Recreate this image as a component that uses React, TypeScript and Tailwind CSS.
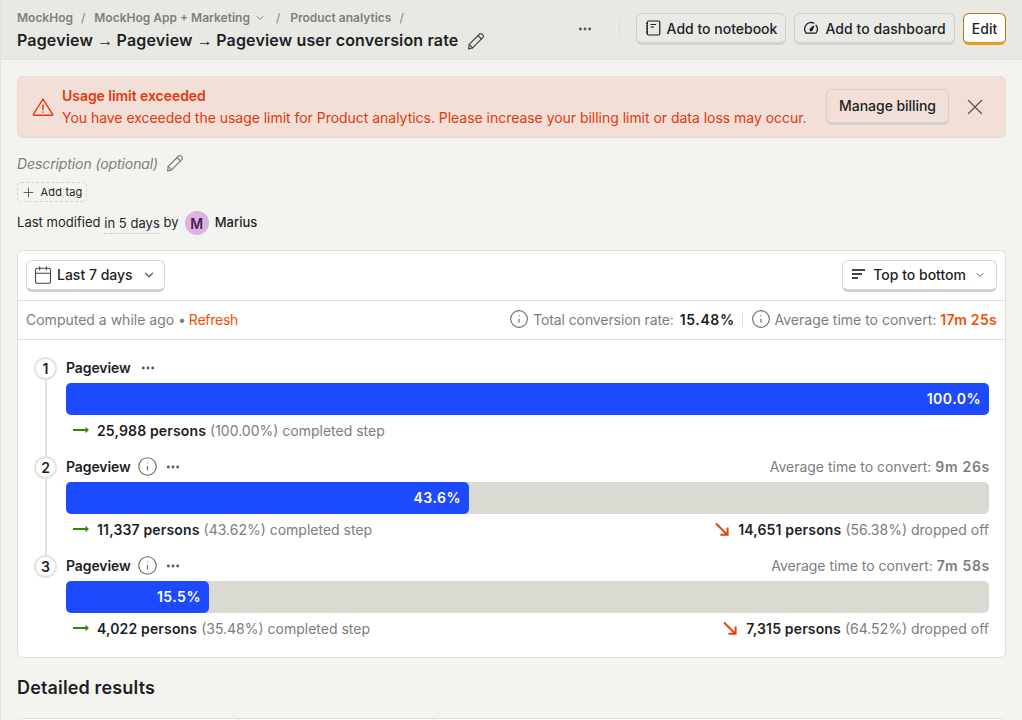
import { Calendar, ChevronDown, Info, MoreHorizontal, Plus, X } from 'lucide-react';

function Pencil({ className }: { className?: string }) {
    return (
        <svg viewBox="0 0 20 20" fill="none" stroke="currentColor" strokeWidth="1.2" strokeLinejoin="round" strokeLinecap="round" className={className}>
            <path d="M3.2 13.4 13.6 3a1.6 1.6 0 0 1 2.3 0l1.1 1.1a1.6 1.6 0 0 1 0 2.3L6.6 16.8l-4 1 .6-4.4Z" />
            <path d="m12 4.6 3.4 3.4M3.2 13.4l3.4 3.4" />
        </svg>
    );
}

function Notebook() {
    return (
        <svg viewBox="0 0 16 16" fill="none" stroke="currentColor" strokeWidth="1.2" className="h-[16px] w-[16px]">
            <rect x="2.2" y="1" width="12.6" height="14" rx="1.4" />
            <path d="M5.5 4.5h5.5M5.5 7h3.5M1 3.5h2M1 6h2M1 8.5h2M1 11h2M1 13h2" />
        </svg>
    );
}

function Gauge() {
    return (
        <svg viewBox="0 0 16 16" fill="none" stroke="currentColor" strokeWidth="1.3" strokeLinecap="round" className="h-[16px] w-[16px]">
            <path d="M3 13.2A6.8 6.8 0 0 1 8 2.4c1 0 2 .2 2.8.7M13 5.2a6.8 6.8 0 0 1 0 8H3" />
            <path d="m7.2 9.2 3.6-3.2-1.8 4.2a1 1 0 0 1-1.8-1Z" fill="currentColor" />
        </svg>
    );
}

function Warning() {
    return (
        <svg viewBox="0 0 22 20" fill="none" stroke="currentColor" strokeWidth="1.4" strokeLinejoin="round" strokeLinecap="round" className="h-[20px] w-[22px]">
            <path d="M11 2 1.4 17.4a.6.6 0 0 0 .5.9h18.2a.6.6 0 0 0 .5-.9L11 2Z" />
            <path d="M11 8v4.5M11 15v.3" />
        </svg>
    );
}

function SortBars() {
    return (
        <svg viewBox="0 0 14 14" fill="currentColor" className="h-[14px] w-[14px] text-[#444]">
            <rect x="0" y="1" width="13" height="2" />
            <rect x="0" y="5" width="10" height="2" />
            <rect x="0" y="9" width="6" height="2" />
        </svg>
    );
}

function RightArrow() {
    return (
        <svg viewBox="0 0 16 8" className="h-[8px] w-[16px]" fill="#388600">
            <rect x="0" y="3" width="14" height="2" />
            <path d="M12.5 0.8 16 4l-3.5 3.2Z" />
        </svg>
    );
}

function DownArrow() {
    return (
        <svg viewBox="0 0 14 14" className="h-[14px] w-[14px]" fill="none" stroke="#e83f0c" strokeWidth="2">
            <path d="M1 1.5 12 12.5M12.6 5.5v7.2H5.4" />
        </svg>
    );
}

function ActionButton({ icon, label, className }: { icon?: React.ReactNode; label: string; className: string }) {
    return (
        <div className={`flex h-[32px] items-center justify-center gap-[6px] rounded-[6px] border border-b-[3px] text-[14px] font-[450] text-[#1d1f27] ${className}`}>
            {icon}
            {label}
        </div>
    );
}

type Step = {
    n: number;
    width: string;
    pct: string;
    persons: string;
    rate: string;
    time?: string;
    dropped?: string;
    dropRate?: string;
};

const steps: Step[] = [
    { n: 1, width: 'w-full', pct: '100.0%', persons: '25,988', rate: '100.00%' },
    { n: 2, width: 'w-[403px]', pct: '43.6%', persons: '11,337', rate: '43.62%', time: '9m 26s', dropped: '14,651', dropRate: '56.38%' },
    { n: 3, width: 'w-[143px]', pct: '15.5%', persons: '4,022', rate: '35.48%', time: '7m 58s', dropped: '7,315', dropRate: '64.52%' },
];

function FunnelStep({ step }: { step: Step }) {
    return (
        <div className="relative pl-[32px]">
            {step.n < 3 && <div className="absolute left-[11px] top-[20px] h-[90px] w-[2px] bg-[#e3e3de]" />}
            <div className="absolute left-0 top-[4px] flex h-[23px] w-[23px] items-center justify-center rounded-full border-2 border-[#e3e3de] bg-white text-[14px] font-semibold text-[#1d1f27]">
                {step.n}
            </div>
            <div className="flex h-[30px] items-center pb-[1px]">
                <span className="text-[14px] font-semibold tracking-[-0.1px] text-[#1d1f27]">Pageview</span>
                {step.n > 1 && <Info size={21} strokeWidth={1.4} className="ml-[6px] text-[#6f6f6c]" />}
                <MoreHorizontal size={16} strokeWidth={2.2} className={`text-[#555] ${step.n > 1 ? 'ml-[7px]' : 'ml-[9px]'}`} />
                {step.time && (
                    <span className="ml-auto mr-[-1px] text-[14px] text-[#7d7d7b]">
                        Average time to convert: <b className="font-semibold tracking-[0.7px]">{step.time}</b>
                    </span>
                )}
            </div>
            <div className="h-[32px] rounded-[5px] bg-[#dadad3]">
                <div className={`flex h-full items-center justify-end rounded-[5px] bg-[#1d4aff] pb-[1px] pr-[8px] text-[14px] font-semibold tracking-[0.5px] text-white ${step.width}`}>
                    {step.pct}
                </div>
            </div>
            <div className="flex h-[34px] items-center pb-[4px] text-[14px]">
                <span className="ml-[7px] mr-[8px]"><RightArrow /></span>
                <b className="font-semibold tracking-[0.15px] text-[#1d1f27]">{step.persons} persons</b>
                <span className="ml-[4px] text-[#7d7d7b]">({step.rate}) completed step</span>
                {step.dropped && (
                    <span className="ml-auto flex items-center">
                        <span className="mr-[9px]"><DownArrow /></span>
                        <b className="font-semibold tracking-[0.15px] text-[#1d1f27]">{step.dropped} persons</b>
                        <span className="ml-[4px] text-[#7d7d7b]">({step.dropRate}) dropped off</span>
                    </span>
                )}
            </div>
        </div>
    );
}

export default function App() {
    return (
        <div className="h-[720px] overflow-hidden border-l border-[#e3e3de] bg-[#f3f4ef] font-['Inter',sans-serif] text-[#1d1f27]">
            <header className="flex h-[60px] items-start justify-between border-b border-[#e3e3de] bg-[#e9e9e4] pl-[16px] pr-[16px]">
                <div className="pt-[9px]">
                    <div className="flex h-[17px] items-center text-[12px] font-semibold text-[#7f7f7c]">
                        <span>MockHog</span>
                        <span className="ml-[8px] mr-[9px] font-normal">/</span>
                        <span>MockHog App + Marketing</span>
                        <ChevronDown size={12} className="ml-[4px]" />
                        <span className="ml-[10px] mr-[10px] font-normal">/</span>
                        <span>Product analytics</span>
                        <span className="ml-[8px] font-normal">/</span>
                    </div>
                    <div className="mt-[4px] flex items-center text-[16px] font-semibold leading-[20px] tracking-[0.16px]">
                        <span>
                            Pageview <span className="mr-[-1px] font-['Liberation_Sans'] font-normal">→</span> Pageview <span className="mr-[-1px] font-['Liberation_Sans'] font-normal">→</span> Pageview user conversion rate
                        </span>
                        <Pencil className="ml-[8px] h-[20px] w-[20px] text-[#444]" />
                    </div>
                </div>
                <div className="flex items-center pt-[13px]">
                    <MoreHorizontal size={16} strokeWidth={2.4} className="text-[#555]" />
                    <div className="ml-[26px] mr-[16px] h-[17px] w-px bg-[#dcdcd7]" />
                    <ActionButton icon={<Notebook />} label="Add to notebook" className="w-[150px] border-[#cfcfcb] border-b-[#d4d1d3] bg-[#e9e9e5]" />
                    <div className="w-[8px]" />
                    <ActionButton icon={<Gauge />} label="Add to dashboard" className="w-[161px] border-[#cfcfcb] border-b-[#d4d1d3] bg-[#e9e9e5] tracking-[0.06px]" />
                    <div className="w-[8px]" />
                    <ActionButton label="Edit" className="w-[43px] border-[#b17816] border-b-[#e89a1f] bg-white" />
                </div>
            </header>

            <main className="pl-[16px] pr-[16px] pt-[16px]">
                <div className="flex h-[62px] items-center rounded-[6px] border border-[#e6dcd5] bg-[#f1dfd8] pl-[14px] pr-[17px] text-[#e3390c]">
                    <Warning />
                    <div className="ml-[8px] flex-1 text-[14px] leading-[22px] tracking-[-0.03px]">
                        <div className="font-semibold tracking-[-0.05px]">Usage limit exceeded</div>
                        <div>You have exceeded the usage limit for Product analytics. Please increase your billing limit or data loss may occur.</div>
                    </div>
                    <div className="flex h-[36px] items-center rounded-[6px] border border-b-[3px] border-[#d5d0cd] border-b-[#d5d1d1] px-[12px] pb-[1px] text-[14px] font-[450] tracking-[-0.05px] text-[#1d1f27]">
                        Manage billing
                    </div>
                    <X size={26} strokeWidth={1.2} className="ml-[13px] text-[#555]" />
                </div>

                <div className="mt-[14px] flex h-[22px] items-center text-[14px] italic tracking-[-0.1px] text-[#7d7d7b]">
                    Description (optional)
                    <Pencil className="ml-[7px] h-[20px] w-[20px]" />
                </div>
                <div className="mt-[8px] flex h-[20px] w-[70px] items-center justify-center gap-[4px] rounded-[4px] border border-dashed border-[#d6d6d1] text-[11px] font-normal tracking-[0.2px]">
                    <Plus size={15} strokeWidth={1.5} className="text-[#555]" />
                    Add tag
                </div>
                <div className="mt-[9px] flex h-[24px] items-center text-[13px] tracking-[0.03px]">
                    Last modified&nbsp;<span className="mb-[-2px] border-b border-dotted border-[#c4c4c0] pb-[2px] leading-[16px]">in 5 days</span>&nbsp;by
                    <span className="ml-[6px] flex h-[24px] w-[24px] items-center justify-center rounded-full bg-[#dcb1e3] text-[14px] font-semibold text-[#4a2252]">M</span>
                    <span className="ml-[6px] font-[450]">Marius</span>
                </div>

                <section className="mt-[15px] rounded-[6px] border border-[#dedfd9] bg-white">
                    <div className="flex h-[50px] items-center justify-between border-b border-[#dedfd9] px-[8px]">
                        <div className="flex h-[32px] items-center rounded-[6px] border border-b-[3px] border-[#d8d8d3] border-b-[#d4d1d3] pl-[6px] pr-[8px] text-[14px] font-[450]">
                            <Calendar size={20} strokeWidth={1.25} className="mr-[4px] text-[#444]" />
                            Last 7 days
                            <ChevronDown size={14} className="ml-[9px] text-[#555]" />
                        </div>
                        <div className="flex h-[32px] items-center rounded-[6px] border border-b-[3px] border-[#d8d8d3] border-b-[#d4d1d3] pl-[9px] pr-[10px] text-[14px] font-[450]">
                            <SortBars />
                            <span className="ml-[7px] mr-[8px]">Top to bottom</span>
                            <ChevronDown size={12} className="text-[#555]" />
                        </div>
                    </div>
                    <div className="flex h-[39px] items-center border-b border-[#dedfd9] px-[8px] pb-[2px] text-[14px] text-[#7d7d7b]">
                        <span>Computed a while ago • <span className="ml-[-1px] tracking-[-0.25px] text-[#f54e00]">Refresh</span></span>
                        <div className="ml-auto flex items-center">
                            <Info size={20} strokeWidth={1.4} className="mr-[4px] text-[#6f6f6c]" />
                            <span className="tracking-[-0.1px]">Total conversion rate:</span>
                            <b className="ml-[6px] font-semibold tracking-[0.6px] text-[#1d1f27]">15.48%</b>
                            <div className="ml-[7px] mr-[8px] h-[14px] w-px bg-[#dedfd9]" />
                            <Info size={20} strokeWidth={1.4} className="mr-[4px] text-[#6f6f6c]" />
                            Average time to convert:
                            <b className="ml-[4px] font-semibold tracking-[0.3px] text-[#f54e00]">17m 25s</b>
                        </div>
                    </div>
                    <div className="flex flex-col gap-[3px] px-[16px] pb-[10px] pt-[13px]">
                        {steps.map((s) => <FunnelStep key={s.n} step={s} />)}
                    </div>
                </section>

                <h2 className="mt-[18px] text-[18px] font-semibold leading-[24px] tracking-[0.15px]">Detailed results</h2>
                <div className="mt-[18px] grid h-[40px] grid-cols-[222px_194px_1fr] rounded-t-[6px] border border-[#dedfd9] bg-white">
                    <div className="border-r border-[#dedfd9]" />
                    <div className="border-r border-[#dedfd9]" />
                    <div />
                </div>
            </main>
        </div>
    );
}
